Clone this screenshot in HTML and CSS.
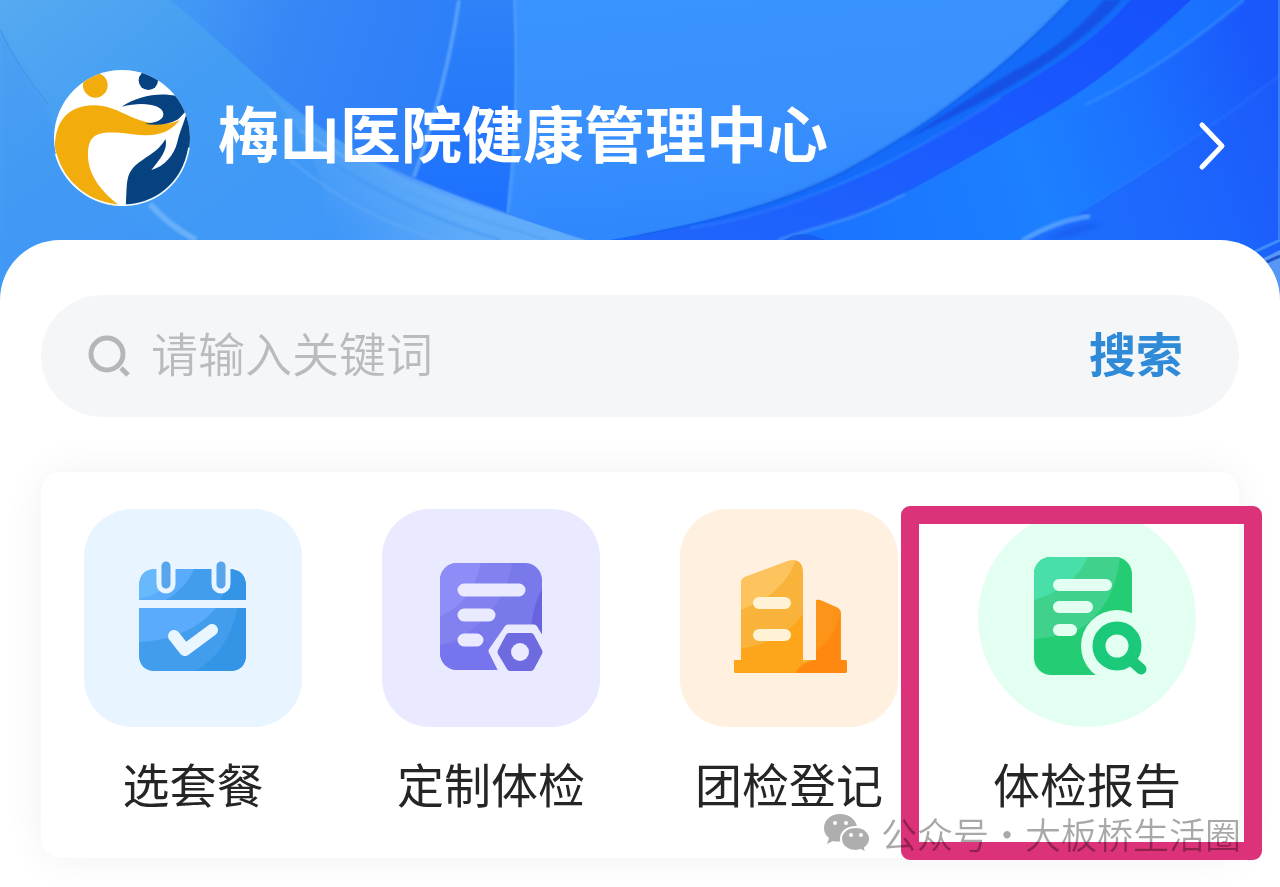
FILE: index.html
```html
<!DOCTYPE html>
<html lang="zh-CN">
<head>
<meta charset="utf-8">
<meta name="viewport" content="width=device-width, initial-scale=1">
<title>梅山医院健康管理中心</title>
<link rel="stylesheet" href="styles.css">
</head>
<body>
<header class="hero">
  <svg class="hero-art" viewBox="0 0 1280 300" preserveAspectRatio="none" aria-hidden="true">
    <defs>
      <linearGradient id="base" x1="0" y1="0" x2="1" y2="0.3"><stop offset="0" stop-color="#55aaf0"/><stop offset="0.22" stop-color="#439cf4"/><stop offset="0.45" stop-color="#3f97f8"/></linearGradient>
      <linearGradient id="leaf" gradientUnits="userSpaceOnUse" x1="170" y1="20" x2="480" y2="120"><stop offset="0" stop-color="#439af5"/><stop offset="0.35" stop-color="#3787f6"/><stop offset="1" stop-color="#2a7cfa"/></linearGradient>
      <linearGradient id="slit" x1="0" y1="0" x2="0" y2="1"><stop offset="0" stop-color="#2f82f8"/><stop offset="1" stop-color="#1d70fd"/></linearGradient>
      <linearGradient id="pane" x1="0" y1="0" x2="0.3" y2="1"><stop offset="0" stop-color="#3a93ff"/><stop offset="0.5" stop-color="#3a90fd"/><stop offset="1" stop-color="#2e86fd"/></linearGradient>
      <linearGradient id="sea" x1="0" y1="0.6" x2="1" y2="0.4"><stop offset="0" stop-color="#1a72ff"/><stop offset="0.5" stop-color="#1c80ff"/><stop offset="0.75" stop-color="#1c70ff"/><stop offset="1" stop-color="#1a58fb"/></linearGradient>
      <linearGradient id="ribbon" x1="0" y1="1" x2="1" y2="0"><stop offset="0" stop-color="#2066fb"/><stop offset="0.5" stop-color="#1b5bfe"/><stop offset="1" stop-color="#1650fc"/></linearGradient>
      <linearGradient id="glow" gradientUnits="userSpaceOnUse" x1="340" y1="240" x2="430" y2="170"><stop offset="0" stop-color="#6db3fa" stop-opacity="0"/><stop offset="1" stop-color="#6db3fa" stop-opacity=".75"/></linearGradient>
      <filter id="soft" x="-20%" y="-20%" width="140%" height="140%"><feGaussianBlur stdDeviation="2"/></filter>
      <filter id="edge" x="-5%" y="-5%" width="110%" height="110%"><feGaussianBlur stdDeviation="1"/></filter>
    </defs>
    <rect width="1280" height="300" fill="url(#base)"/>
    <path d="M0 26Q18 66 45 102L68 170Q110 215 180 240V300H0Z" fill="#3f95f5" opacity=".4" filter="url(#soft)"/>
    <path d="M170 0C230 48 262 88 347 145S480 204 600 244H1280V0Z" fill="url(#leaf)"/>
    <path d="M459 0Q445 90 414 177Q450 195 506 213Q519 100 513 0Z" fill="url(#slit)"/>
    <path d="M262 84Q300 118 347 146C410 182 480 204 590 242H300Q360 200 262 84Z" fill="url(#glow)" filter="url(#edge)"/>
    <g fill="none" filter="url(#edge)" stroke-width="3">
      <path d="M300 130C370 175 430 205 540 240" stroke="#84bdfb" opacity=".4"/>
      <path d="M320 155C380 195 430 218 500 240" stroke="#3c93f3" opacity=".5"/>
      <path d="M350 160C410 195 460 215 545 240" stroke="#3c93f3" opacity=".4"/>
      <path d="M290 160C340 200 380 222 440 240" stroke="#77b6f9" opacity=".3"/>
      <path d="M150 204Q168 225 196 240" stroke="#82c0fb" stroke-width="6" opacity=".6"/>
    </g>
    <path d="M459 0Q446 88 414 177" fill="none" stroke="#6db2fd" stroke-width="4" opacity=".65" filter="url(#edge)"/>
    <path d="M0 30Q18 68 48 104" fill="none" stroke="#3689dc" stroke-width="1" opacity=".6"/>
    <path d="M513 0Q519 110 506 213Q540 226 600 244H1000L1280 0Z" fill="url(#pane)"/>
    <path d="M515 0Q520 110 508 213" fill="none" stroke="#55a3fd" stroke-width="4" opacity=".5" filter="url(#edge)"/>
    <path d="M1070 0C1030 42 990 75 960 97C925 124 885 149 843 172C800 194 740 217 610 240V300H1280V0Z" fill="#146bf9"/>
    <path d="M1070 0C1030 42 990 75 960 97C925 124 885 149 843 172C800 194 740 217 640 236" fill="none" stroke="#1457dc" stroke-width="2" opacity=".6" filter="url(#edge)"/>
    <path d="M1130 0C1080 60 1000 95 930 140S790 208 620 240H778C830 222 850 220 891 200C950 170 990 145 1043 115Q1075 95 1101 77T1191 0Z" fill="url(#ribbon)"/>
    <path d="M1104 0Q1070 40 1030 62T905 140Q1010 90 1052 60T1122 0Z" fill="#1449df" opacity=".75" filter="url(#edge)"/>
    <path d="M1000 98Q920 150 840 184T690 228" fill="none" stroke="#2f82ff" stroke-width="3" opacity=".5" filter="url(#edge)"/>
    <path d="M1191 0Q1130 55 1101 77T1043 115C990 145 950 170 891 200C850 220 830 222 778 240V300H1280V0Z" fill="url(#sea)"/>
    <path d="M905 194C850 222 830 222 778 240" fill="none" stroke="#4b98fc" stroke-width="3" opacity=".6" filter="url(#edge)"/>
    <path d="M1191 0L1244 0Q1160 70 1085 105Q1050 125 1043 115Q1110 80 1191 0Z" fill="#1b7dff" opacity=".6"/>
    <path d="M1244 0Q1160 70 1085 105" fill="none" stroke="#3b92ff" stroke-width="3" opacity=".55" filter="url(#edge)"/>
    <path d="M1280 75Q1190 145 1110 195T1010 240H1280Z" fill="#1d5dfb" opacity=".5"/>
    <path d="M1280 75Q1190 145 1095 202" fill="none" stroke="#367cff" stroke-width="2" opacity=".4" filter="url(#edge)"/>
    <path d="M1022 241Q1055 221 1090 216" fill="none" stroke="#66abff" stroke-width="5" opacity=".7" filter="url(#edge)"/>
    <path d="M1045 240Q1070 222 1100 224Q1085 236 1045 240Z" fill="#1554e8" opacity=".5" filter="url(#soft)"/>
    <path d="M784 240Q800 228 825 240Z" fill="#1652e3" opacity=".6"/>
    <path d="M1256 262L1280 250V300H1262Z" fill="#5697f6"/>
    <path d="M1250 254L1280 240" stroke="#3f8cf8" stroke-width="3"/>
    <path d="M1262 264L1280 256" stroke="#1d52c8" stroke-width="3"/>
    <path d="M1279 0V240" stroke="#3b7df8" stroke-width="2"/>
  </svg>
  <div class="hero-row">
    <svg class="logo" viewBox="43 29 408 408" role="img" aria-label="医院标志">
      <defs><clipPath id="disc"><circle cx="247" cy="233" r="204"/></clipPath></defs>
      <circle cx="247" cy="233" r="204" fill="#fff"/>
      <g clip-path="url(#disc)">
        <circle cx="167" cy="75" r="37" fill="#f2ad0c"/>
        <ellipse cx="326" cy="60" rx="29" ry="29" fill="#05427f"/>
        <path d="M46 262C45 200 72 135 163 135C235 135 275 187 360 191C390 192 405 185 420 180C395 210 365 226 315 225C275 223 235 213 190 218C150 224 142 255 146 300C151 350 190 400 240 436H225C130 420 62 350 46 262Z" fill="#f2ad0c"/>
        <path d="M246 139C285 112 345 98 390 104L412 106L440 152C430 160 425 170 413 178C385 194 345 196 315 190C345 187 373 180 371 160C369 132 308 122 246 139Z" fill="#05427f"/>
        <path d="M440 160L455 190V440H258C262 385 258 350 276 328C300 295 355 280 377 236C388 270 352 305 335 329C375 318 403 285 413 245C420 215 430 195 440 160Z" fill="#05427f"/>
      </g>
      <path d="M48 280C72 368 150 432 247 435C350 434 430 368 448 262" fill="none" stroke="#f2fbff" stroke-width="5"/>
    </svg>
    <h1 class="title">梅山医院健康管理中心</h1>
    <button class="more" type="button" aria-label="查看详情">
      <svg viewBox="0 0 32 50" width="32" height="50" fill="none" stroke="#fff" stroke-width="5" stroke-linecap="round" stroke-linejoin="round"><path d="M6 4L26 25L6 46"/></svg>
    </button>
  </div>
</header>

<main class="sheet">
  <form class="search" role="search">
    <svg class="search-icon" viewBox="0 0 44 44" fill="none" stroke="#b4b6b8" stroke-width="5" aria-hidden="true"><circle cx="20" cy="20" r="16"/><path d="M34 34L41 41"/></svg>
    <input class="search-input" type="search" placeholder="请输入关键词" aria-label="关键词">
    <button class="search-button" type="submit">搜索</button>
  </form>

  <nav class="card" aria-label="体检服务">
    <a class="item" href="#packages">
      <span class="tile tile-blue">
        <svg viewBox="0 0 218 218" aria-hidden="true">
          <defs><clipPath id="cal"><path d="M72 60H144Q162 60 162 78V91H55V78Q55 60 72 60ZM55 99H162V145Q162 162 145 162H72Q55 162 55 145Z"/></clipPath></defs>
          <g clip-path="url(#cal)">
            <rect x="50" y="55" width="120" height="115" fill="#5aabfb"/>
            <path d="M80 92Q102 80 111 58H165V93ZM55 133Q105 131 133 98H165V165H55Z" fill="#429eed"/>
            <path d="M135 92Q142 85 147 58H165V93ZM111 162Q143 145 154 98H165V165Z" fill="#3494e5"/>
            <path d="M55 60H92Q85 84 55 90Z" fill="#68b9fc"/>
          </g>
          <g fill="none" stroke-linecap="round">
            <path d="M82 58V75M137 58V75" stroke="#e9f5ff" stroke-width="19"/>
            <path d="M82 57V75M137 57V75" stroke="#58a5ee" stroke-width="9"/>
            <path d="M90 127L101 141L128 121" stroke="#e9f5ff" stroke-width="12" stroke-linejoin="round"/>
          </g>
        </svg>
      </span>
      <span class="label">选套餐</span>
    </a>
    <a class="item" href="#custom">
      <span class="tile tile-violet">
        <svg viewBox="0 0 218 218" aria-hidden="true">
          <defs><clipPath id="doc"><rect x="58" y="54" width="102" height="107" rx="17"/></clipPath></defs>
          <g clip-path="url(#doc)">
            <rect x="57" y="54" width="103" height="107" fill="#7979eb"/>
            <path d="M57 54H99Q91 94 57 108Z" fill="#8e8df8"/>
            <path d="M99 54H130Q124 94 92 119Q80 132 57 136V108Q91 94 99 54Z" fill="#8381f0"/>
            <path d="M160 80Q152 94 149 117Q136 148 107 161H160Z" fill="#6864df"/>
            <path d="M57 137Q82 137 98 120L120 161H57Z" fill="#7675ee"/>
          </g>
          <path d="M82 81H137M82 106H107M82 131H95" stroke="#e9eaff" stroke-width="13" stroke-linecap="round"/>
          <path d="M126 119H152L166 142V162H120L110 142Z" fill="#e9eaff" stroke="#e9eaff" stroke-width="7" stroke-linejoin="round"/>
          <path d="M127 124H149Q151 124 152 126L160 141Q161 143 160 145L152 160Q151 162 149 162H128Q126 162 125 160L116 145Q115 143 116 141L124 126Q125 124 127 124Z" fill="#6d6bdf"/>
          <circle cx="138" cy="143" r="9" fill="#e9eaff"/>
        </svg>
      </span>
      <span class="label">定制体检</span>
    </a>
    <a class="item" href="#group">
      <span class="tile tile-orange">
        <svg viewBox="0 0 218 218" aria-hidden="true">
          <defs><clipPath id="city"><path d="M56 164Q54 164 54 162V152Q54 151 56 151H61V74Q61 70 65 68L108 52Q123 48 123 64V151H136V92Q136 90 140 91L158 99Q161 101 161 104V151H165Q167 151 167 153V162Q167 164 165 164Z"/></clipPath></defs>
          <g clip-path="url(#city)">
            <rect x="50" y="45" width="120" height="122" fill="#f9b23a"/>
            <path d="M60 101Q105 85 116 50H55V101Z" fill="#fdc45e"/>
            <path d="M54 140Q99 137 123 105V164H54Z" fill="#fda51b"/>
            <path d="M130 90H165V167H114Q120 151 136 151Z" fill="#fb9418"/>
            <path d="M135 142Q155 130 160 104V151H170V167H114Q121 153 136 151Z" fill="#ff8910"/>
          </g>
          <path d="M79 94H105M79 126H105" stroke="#fff2d5" stroke-width="12" stroke-linecap="round"/>
        </svg>
      </span>
      <span class="label">团检登记</span>
    </a>
    <a class="item" href="#report">
      <span class="tile tile-green">
        <svg viewBox="0 0 218 218" aria-hidden="true">
          <defs><clipPath id="rep"><rect x="56" y="48" width="98" height="118" rx="17"/></clipPath></defs>
          <g clip-path="url(#rep)">
            <rect x="56" y="48" width="98" height="118" fill="#24cc74"/>
            <path d="M56 48H142Q137 98 100 121Q80 128 56 130Z" fill="#40d28d"/>
            <path d="M56 48H110Q96 79 56 91Z" fill="#48e0a8"/>
          </g>
          <path d="M81 76H128M81 98H109M81 121H93" stroke="#e3fff2" stroke-width="12" stroke-linecap="round"/>
          <circle cx="139" cy="137" r="36" fill="#e3fff2"/>
          <path d="M154 152L163 160" stroke="#1ac578" stroke-width="11" stroke-linecap="round"/>
          <circle cx="139" cy="137" r="18" fill="#e3fff2" stroke="#1bc97a" stroke-width="13"/>
        </svg>
      </span>
      <span class="label">体检报告</span>
      <span class="highlight"></span>
    </a>
    <div class="watermark">
      <svg class="wechat" viewBox="0 0 48 40" fill="#aeaeae" aria-hidden="true">
        <path d="M17 1C8 1 1 7 1 15Q1 21 6 25L4 31L10 28Q14 29 19 28C27 27 34 22 34 15C34 7 26 1 17 1Z"/>
        <path d="M33 14C24 14 18 19 18 26S25 38 33 38L38 37L43 40L42 35Q47 31 47 26C47 19 41 14 33 14Z" stroke="#fff" stroke-width="2"/>
        <g fill="#fff"><circle cx="12" cy="10" r="2"/><circle cx="23" cy="10" r="2"/><circle cx="28" cy="22" r="2"/><circle cx="38" cy="22" r="2"/></g>
      </svg>
      <span>公众号·大板桥生活圈</span>
    </div>
  </nav>
</main>
</body>
</html>
```

FILE: styles.css
```css
* {
  box-sizing: border-box;
}

body {
  margin: 0;
  background: #fff;
  color: #252525;
  font-family: "Noto Sans CJK SC", "Noto Sans", sans-serif;
}

button,
input {
  border: 0;
  padding: 0;
  background: none;
  font: inherit;
}

.hero {
  position: relative;
  height: 300px;
  padding: 70px 52px 0 54px;
  overflow: hidden;
}

.hero-art {
  position: absolute;
  inset: 0;
  width: 100%;
  height: 100%;
}

.hero-row {
  position: relative;
  display: flex;
  align-items: center;
}

.logo {
  flex: none;
  width: 136px;
  height: 136px;
}

.title {
  flex: 1;
  margin: 0 0 12px 28px;
  color: #fff;
  font-size: 61px;
  font-weight: 700;
  line-height: 80px;
  white-space: nowrap;
}

.more {
  margin-top: 16px;
}

.more svg,
.tile svg {
  display: block;
}

.sheet {
  position: relative;
  margin-top: -60px;
  padding: 55px 41px 28px;
  border-radius: 60px 60px 0 0;
  background: #fff;
}

.search {
  display: flex;
  align-items: center;
  height: 122px;
  padding: 0 56px 0 46px;
  border-radius: 61px;
  background: #f4f6f8;
}

.search-icon {
  flex: none;
  width: 44px;
  height: 44px;
}

.search-input {
  flex: 1;
  min-width: 0;
  margin: 0 20px;
  padding-bottom: 8px;
  font-size: 47px;
  line-height: 64px;
  outline: 0;
  appearance: none;
}

.search-input::placeholder {
  color: #b9bbbd;
  font-weight: 350;
  opacity: 1;
}

.search-button {
  padding-bottom: 8px;
  color: #2f8bd8;
  font-size: 47px;
  font-weight: 700;
  line-height: 64px;
}

.card {
  position: relative;
  display: flex;
  justify-content: space-between;
  margin-top: 55px;
  padding: 37px 43px 47px;
  border-radius: 20px;
  background: #fff;
  box-shadow: 0 0 40px rgba(0, 0, 0, 0.06);
}

.item {
  position: relative;
  display: flex;
  flex-direction: column;
  align-items: center;
  gap: 28px;
  color: inherit;
  text-decoration: none;
}

.tile {
  width: 218px;
  height: 218px;
  border-radius: 48px;
}

.tile-blue {
  background: #e8f4ff;
}

.tile-violet {
  background: #e9eaff;
}

.tile-orange {
  background: #fff0df;
}

.tile-green {
  border-radius: 50%;
  background: #e2fff2;
}

.label {
  font-size: 47px;
  line-height: 56px;
  white-space: nowrap;
}

.highlight {
  position: absolute;
  inset: -3px -66px -49px -77px;
  border: 18px solid #dc3279;
  border-radius: 9px;
}

.watermark {
  position: absolute;
  right: -2px;
  bottom: 5px;
  display: flex;
  align-items: center;
  gap: 10px;
  color: rgba(0, 0, 0, 0.34);
  font-size: 36px;
  font-weight: 350;
  line-height: 40px;
  white-space: nowrap;
}

.wechat {
  width: 48px;
  height: 40px;
}
```
